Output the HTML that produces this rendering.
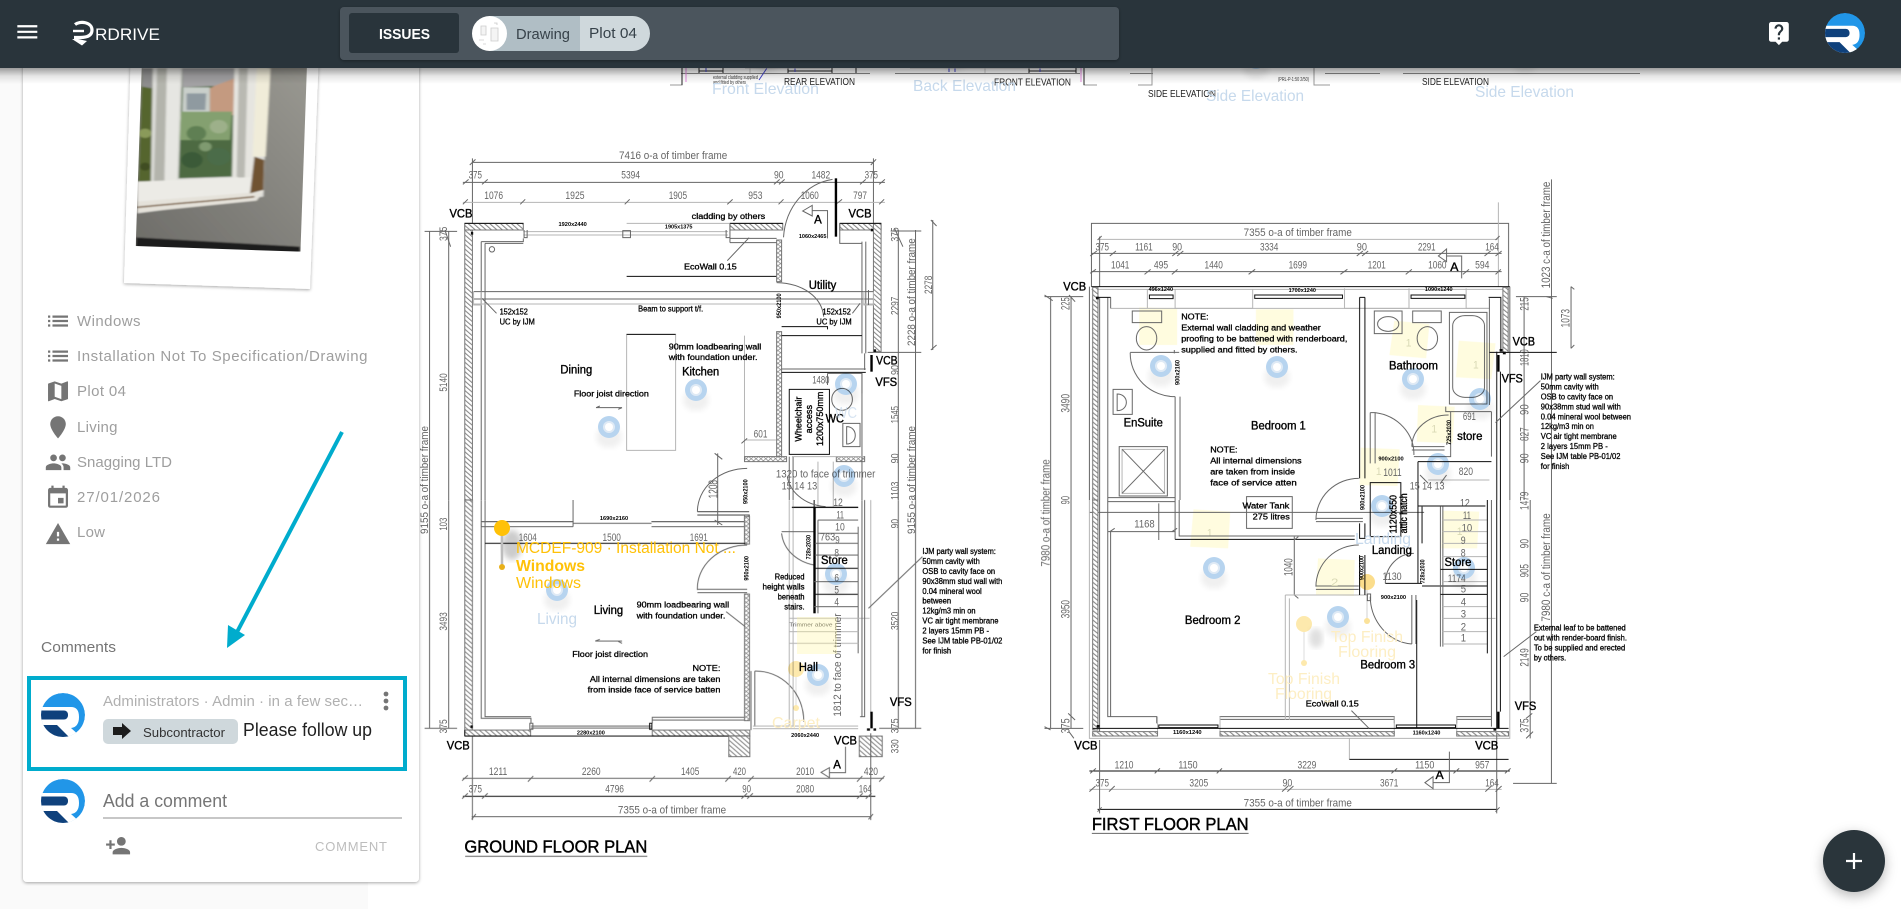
<!DOCTYPE html>
<html><head><meta charset="utf-8"><title>Issue</title>
<style>
html,body{margin:0;padding:0;background:#fff;overflow:hidden}
svg{display:block}
text{font-family:"Liberation Sans",Arial,sans-serif}
.dw path,.dw rect,.dw ellipse,.dw polygon{vector-effect:non-scaling-stroke;fill:none;stroke-width:1}
.dw .g{stroke:#b5b5b5}.dw .a{stroke:#666}.dw .k{stroke:#111}.dw .K{stroke:#000;stroke-width:2.4}
.dw .h{fill:url(#h);stroke:#777}.dw .x{fill:url(#x);stroke:#777}
.dw .st{fill:#fff59d;stroke:none;opacity:.33}
.d{font-size:33px;fill:#666}
.n{font-size:25px;fill:#000;stroke:#000;stroke-width:.9}
.l{font-size:35px;fill:#000;stroke:#000;stroke-width:1.1}
.s{font-size:16px;fill:#000;font-weight:bold}
.c{font-size:30px;fill:#666}
.t{font-size:52px;fill:#000;stroke:#000;stroke-width:1.3}
.y{font-size:34px;fill:#d9d9b5}
.ll{font-size:16px;fill:#c6d9ec}
.o{font-size:16px;fill:#ffc107}
.f{font-size:16px;fill:#fdeec3}
.si{fill:#757575}.st2{font-size:15px;fill:#9e9e9e}
.e{font-size:10px;fill:#222}
.pn{mix-blend-mode:multiply}
</style></head><body>
<svg xmlns="http://www.w3.org/2000/svg" width="1901" height="909" viewBox="0 0 1901 909">
<defs>
<pattern id="h" patternUnits="userSpaceOnUse" width="10" height="10" patternTransform="rotate(-45)"><rect width="10" height="10" fill="#fff"/><rect width="3" height="10" fill="#888"/></pattern>
<pattern id="x" patternUnits="userSpaceOnUse" width="9" height="9" patternTransform="rotate(45)"><rect width="9" height="9" fill="#fff"/><rect width="2" height="9" fill="#888"/><rect width="9" height="2" fill="#888"/></pattern>
<filter id="sh" x="-10%" y="-10%" width="120%" height="120%"><feDropShadow dx="0" dy="1" stdDeviation="1.5" flood-color="#000" flood-opacity=".35"/></filter>
<filter id="sh2" x="-30%" y="-30%" width="160%" height="160%"><feDropShadow dx="0" dy="4" stdDeviation="6" flood-color="#000" flood-opacity=".28"/></filter>
<filter id="bl"><feGaussianBlur stdDeviation=".3"/></filter>
<filter id="bz" x="-2%" y="-2%" width="104%" height="104%"><feGaussianBlur stdDeviation=".9"/></filter>
<filter id="bp" x="-2%" y="-2%" width="104%" height="104%"><feGaussianBlur stdDeviation="2.200"/></filter>
<filter id="bs"><feGaussianBlur stdDeviation="3"/></filter>
<linearGradient id="hs" x1="0" y1="0" x2="0" y2="1"><stop offset="0" stop-color="#000" stop-opacity=".38"/><stop offset=".5" stop-color="#000" stop-opacity=".1"/><stop offset="1" stop-color="#000" stop-opacity="0"/></linearGradient>
<linearGradient id="wl" x1="1" y1="0" x2="0" y2="1"><stop offset="0" stop-color="#9b9a93"/><stop offset="1" stop-color="#6c6b67"/></linearGradient>
<g id="pin"><ellipse cx="0" cy="10" rx="13" ry="11" fill="#000" opacity=".06" filter="url(#bs)"/><circle r="11" fill="#b7d4ef"/><circle r="6" fill="#dfeaf5"/><circle r="4" fill="#fff"/></g>
<clipPath id="cc"><circle r="22"/></clipPath>
<g id="av"><g clip-path="url(#cc)"><circle r="22" fill="#2196e8"/><path d="M-24 -8H8Q16 -8 16 2Q16 12 8 13L18 22L8 26H-24Z" fill="#fff"/><rect x="-26" y="-4.500" width="31" height="9" rx="4" fill="#0f417c"/><path d="M-24 10H-6L7 23H-24Z" fill="#0f417c"/></g></g>
</defs>
<rect width="1901" height="909" fill="#fff"/>
<rect width="368" height="909" fill="#fafafa"/>

<!-- elevation strip -->
<g filter="url(#bl)" fill="none" stroke-width="1">
<path d="M681 73.500H870M895 73.500H1080M1130 73.500H1153M1325 73.500H1380M1403 73.500H1640" stroke="#888"/>
<path d="M670 85H682V68M1084 68V85H1097M1138 85H1152V68M1314 68V85H1330" stroke="#999"/>
<path d="M682 68V85M1084 68V85M699 71H723M788 71H832M1029 71H1076M699 68V73M723 68V73M788 68V73M832 68V73M856 68V73M1029 68V73M1076 68V73" stroke="#222"/>
<path d="M686 68V82M1081 68V82" stroke="#e58ae0"/>
<path d="M759 80L767 68M706 68V72M795 68V72M949 68V72M955 68V72M1040 68V72" stroke="#44c"/>
<path d="M745 68H830M910 68H1060M750 68V73M985 68V73" stroke="#ccc"/>
</g>
<text class="e" x="784" y="85" textLength="71" lengthAdjust="spacingAndGlyphs">REAR  ELEVATION</text>
<text class="e" x="994" y="85.500" textLength="77" lengthAdjust="spacingAndGlyphs">FRONT  ELEVATION</text>
<text class="e" x="1148" y="97" textLength="68" lengthAdjust="spacingAndGlyphs">SIDE  ELEVATION</text>
<text class="e" x="1422" y="85" textLength="67" lengthAdjust="spacingAndGlyphs">SIDE  ELEVATION</text>
<text x="713" y="79" font-size="5" fill="#333" textLength="45" lengthAdjust="spacingAndGlyphs">external cladding supplied</text>
<text x="713" y="84" font-size="5" fill="#333" textLength="33" lengthAdjust="spacingAndGlyphs">and fitted by others</text>
<text x="1278" y="81" font-size="5" fill="#333" textLength="31" lengthAdjust="spacingAndGlyphs">(PRL-P-1:50 2/50)</text>

<!-- GROUND FLOOR upper -->
<g class="dw" transform="translate(420,140) scale(.38265,.33333)" filter="url(#bz)">
<path class="a" d="M137 67H1185M112 127H1215M137 55V250M1185 55V250M25 275V1080M75 275V1080M12 274H97M1250 270V1080M1295 270V1080M1230 273H1310M1170 637H1310M1340 240V630"/>
<path class="g" d="M112 187H1215"/>
<path class="a" d="M130 75L145 58M1178 75L1192 58M112 133L127 118M162 133L177 118M925 133L940 118M938 133L953 118M1150 133L1165 118M1200 133L1215 118M112 193L125 178M262 193L275 178M535 193L548 178M803 193L817 178M937 193L950 178M1090 190L1103 178M1200 193L1213 178M65 270L80 320M1240 265L1262 320M1335 240L1350 258M1335 630L1350 615"/>
<rect class="h" x="117" y="250" width="20" height="830"/>
<rect class="h" x="117" y="250" width="153" height="20"/>
<rect class="h" x="810" y="250" width="138" height="20"/>
<rect class="h" x="1097" y="250" width="108" height="20"/>
<rect class="h" x="1185" y="250" width="20" height="385"/>
<path class="k" d="M117 250H270M810 250H948M1097 250H1205"/>
<path class="g" d="M270 275H805M270 285H805M540 250H810"/>
<path class="a" d="M272 270V293H280V270M530 272H550V293H530ZM800 270V293H810"/>
<path class="a" d="M160 305H270V295M170 310H270M160 305V1080M170 310V1080M810 250V308M810 295H932M810 308H932M1097 250V310H1155M1155 305V640M1165 305V640M1162 640V690"/>
<path class="k" d="M540 409H932"/>
<rect class="x" x="932" y="300" width="13" height="125"/>
<rect class="x" x="932" y="575" width="13" height="375"/>
<path class="a" d="M140 455H1185M140 477H1185"/>
<path class="g" d="M140 492H1185M140 455V495H160V455M1160 455V495H1185V455"/>
<path class="a" d="M950 292C955 200 1010 130 1078 118"/>
<path class="K" d="M1087 115V290"/>
<path class="a" d="M932 428C1000 430 1050 470 1055 530M1172 450V495M162 475L200 520M1150 490L1130 520M803 362L860 293"/>
<path class="k" d="M945 560H1065V568M945 587H1155"/>
<path class="g" d="M848 587V950H930M848 900H930"/>
<path class="k" d="M945 697H1165"/>
<path class="a" d="M945 687H1165"/>
<rect class="g" x="540" y="583" width="128" height="348"/>
<path class="k" d="M540 583H668"/>
<rect class="k" x="965" y="748" width="105" height="195"/>
<path class="a" d="M1065 700H1155V760M1065 700V735"/>
<ellipse class="a" cx="1103" cy="778" rx="27" ry="33"/>
<rect class="a" x="1105" y="850" width="45" height="70"/>
<path class="a" d="M1115 860C1145 860 1145 912 1115 912V860Z"/>
<rect class="x" x="848" y="950" width="110" height="15"/>
<rect class="x" x="1088" y="950" width="74" height="15"/>
<path class="a" d="M855 985A130 130 0 0 0 725 1115M725 1115H860M725 1125H860M778 940V1155M965 950V1080M975 950V1080M770 940L790 958M770 1140L790 1155M840 910L855 895"/>
<rect class="x" x="848" y="1125" width="13" height="75"/>
<path class="a" d="M160 1145H400V1080M605 1145H850"/>
<path class="k" d="M972 1102H1145M1030 1102V1080"/>
<path class="a" d="M460 803L528 803M460 803L470 798M528 803L518 808M1155 1080V700"/>
<path class="g" d="M972 950H1160M1080 965V1100M1040 965V1100"/>
<path class="a" d="M960 1010C965 1050 1000 1095 1060 1100"/>
<path class="K" d="M1180 645V695"/>
<rect x="133" y="276" width="6" height="8" style="fill:#111;stroke:none"/>
<rect x="1178" y="266" width="6" height="8" style="fill:#111;stroke:none"/>
<rect x="1186" y="628" width="6" height="8" style="fill:#111;stroke:none"/>
<ellipse class="a" cx="188" cy="328" rx="7" ry="8"/>
<path class="a" d="M1000 213L1025 196V228ZM1025 212H1065V295"/>
</g>
<g transform="translate(420,140) scale(.38265,.33333)" filter="url(#bz)">
<text class="d" x="520" y="57" textLength="283" lengthAdjust="spacingAndGlyphs">7416 o-a of timber frame</text>
<text class="d" x="127" y="116" textLength="35" lengthAdjust="spacingAndGlyphs">375</text>
<text class="d" x="526" y="116" textLength="49" lengthAdjust="spacingAndGlyphs">5394</text>
<text class="d" x="925" y="116" textLength="25" lengthAdjust="spacingAndGlyphs">90</text>
<text class="d" x="1023" y="116" textLength="49" lengthAdjust="spacingAndGlyphs">1482</text>
<text class="d" x="1162" y="116" textLength="35" lengthAdjust="spacingAndGlyphs">375</text>
<text class="d" x="168" y="177" textLength="49" lengthAdjust="spacingAndGlyphs">1076</text>
<text class="d" x="380" y="177" textLength="50" lengthAdjust="spacingAndGlyphs">1925</text>
<text class="d" x="650" y="177" textLength="48" lengthAdjust="spacingAndGlyphs">1905</text>
<text class="d" x="858" y="177" textLength="37" lengthAdjust="spacingAndGlyphs">953</text>
<text class="d" x="995" y="177" textLength="47" lengthAdjust="spacingAndGlyphs">1060</text>
<text class="d" x="1132" y="177" textLength="36" lengthAdjust="spacingAndGlyphs">797</text>
<text class="l" x="77" y="232" textLength="60" lengthAdjust="spacingAndGlyphs">VCB</text>
<text class="l" x="1120" y="232" textLength="60" lengthAdjust="spacingAndGlyphs">VCB</text>
<text class="l" x="1192" y="674" textLength="56" lengthAdjust="spacingAndGlyphs">VCB</text>
<text class="l" x="1190" y="738" textLength="57" lengthAdjust="spacingAndGlyphs">VFS</text>
<text class="n" x="710" y="237" textLength="192" lengthAdjust="spacingAndGlyphs">cladding by others</text>
<text class="l" x="1030" y="250" textLength="20" lengthAdjust="spacingAndGlyphs">A</text>
<text class="s" x="362" y="258" textLength="74" lengthAdjust="spacingAndGlyphs">1920x2440</text>
<text class="s" x="640" y="265" textLength="72" lengthAdjust="spacingAndGlyphs">1905x1375</text>
<text class="s" x="990" y="294" textLength="72" lengthAdjust="spacingAndGlyphs">1060x2465</text>
<text class="n" x="690" y="389" textLength="138" lengthAdjust="spacingAndGlyphs">EcoWall 0.15</text>
<text class="l" x="1016" y="447" textLength="72" lengthAdjust="spacingAndGlyphs">Utility</text>
<text class="n" x="570" y="515" textLength="170" lengthAdjust="spacingAndGlyphs">Beam to support t/f.</text>
<text class="n" x="208" y="524" textLength="74" lengthAdjust="spacingAndGlyphs">152x152</text>
<text class="n" x="208" y="553" textLength="92" lengthAdjust="spacingAndGlyphs">UC by IJM</text>
<text class="n" x="1052" y="524" textLength="74" lengthAdjust="spacingAndGlyphs">152x152</text>
<text class="n" x="1036" y="553" textLength="92" lengthAdjust="spacingAndGlyphs">UC by IJM</text>
<text class="s" transform="translate(944,535) rotate(-90)" textLength="75" lengthAdjust="spacingAndGlyphs">950x2100</text>
<text class="n" x="650" y="628" textLength="242" lengthAdjust="spacingAndGlyphs">90mm loadbearing wall</text>
<text class="n" x="650" y="660" textLength="232" lengthAdjust="spacingAndGlyphs">with foundation under.</text>
<text class="l" x="367" y="700" textLength="83" lengthAdjust="spacingAndGlyphs">Dining</text>
<text class="l" x="685" y="707" textLength="97" lengthAdjust="spacingAndGlyphs">Kitchen</text>
<text class="n" x="402" y="769" textLength="196" lengthAdjust="spacingAndGlyphs">Floor joist direction</text>
<text class="d" x="1025" y="730" textLength="45" lengthAdjust="spacingAndGlyphs">1480</text>
<text class="l" x="1060" y="848" textLength="48" lengthAdjust="spacingAndGlyphs">WC</text>
<text class="n" transform="translate(997,905) rotate(-90)" textLength="135" lengthAdjust="spacingAndGlyphs">Wheelchair</text>
<text class="n" transform="translate(1025,880) rotate(-90)" textLength="85" lengthAdjust="spacingAndGlyphs">access</text>
<text class="n" transform="translate(1053,918) rotate(-90)" textLength="163" lengthAdjust="spacingAndGlyphs">1200x750mm</text>
<text class="d" x="872" y="892" textLength="36" lengthAdjust="spacingAndGlyphs">601</text>
<text class="s" transform="translate(856,1092) rotate(-90)" textLength="74" lengthAdjust="spacingAndGlyphs">950x2100</text>
<text class="d" x="930" y="1013" textLength="260" lengthAdjust="spacingAndGlyphs">1320 to face of trimmer</text>
<text class="d" x="945" y="1048" textLength="93" lengthAdjust="spacingAndGlyphs">15 14 13</text>
<text class="d" transform="translate(777,1075) rotate(-90)" textLength="55" lengthAdjust="spacingAndGlyphs">1208</text>
<text class="c" transform="translate(70,303) rotate(-90)" textLength="43" lengthAdjust="spacingAndGlyphs">375</text>
<text class="c" transform="translate(70,755) rotate(-90)" textLength="55" lengthAdjust="spacingAndGlyphs">5140</text>
<text class="c" transform="translate(70,1172) rotate(-90)" textLength="39" lengthAdjust="spacingAndGlyphs">103</text>
<text class="c" transform="translate(21,1182) rotate(-90)" textLength="324" lengthAdjust="spacingAndGlyphs">9155 o-a of timber frame</text>
<text class="c" transform="translate(1250,305) rotate(-90)" textLength="43" lengthAdjust="spacingAndGlyphs">375</text>
<text class="c" transform="translate(1250,525) rotate(-90)" textLength="55" lengthAdjust="spacingAndGlyphs">2297</text>
<text class="c" transform="translate(1293,618) rotate(-90)" textLength="323" lengthAdjust="spacingAndGlyphs">2228 o-a of timber frame</text>
<text class="c" transform="translate(1338,462) rotate(-90)" textLength="55" lengthAdjust="spacingAndGlyphs">2278</text>
<text class="c" transform="translate(1250,705) rotate(-90)" textLength="30" lengthAdjust="spacingAndGlyphs">90</text>
<text class="c" transform="translate(1250,850) rotate(-90)" textLength="52" lengthAdjust="spacingAndGlyphs">1545</text>
<text class="c" transform="translate(1250,970) rotate(-90)" textLength="30" lengthAdjust="spacingAndGlyphs">90</text>
<text class="c" transform="translate(1250,1080) rotate(-90)" textLength="55" lengthAdjust="spacingAndGlyphs">1103</text>
<text class="c" transform="translate(1250,1165) rotate(-90)" textLength="28" lengthAdjust="spacingAndGlyphs">90</text>
<text class="c" transform="translate(1293,1182) rotate(-90)" textLength="324" lengthAdjust="spacingAndGlyphs">9155 o-a of timber frame</text>
</g>

<!-- GROUND FLOOR lower -->
<g class="dw" transform="translate(420,500) scale(.38265,.33333)" filter="url(#bz)">
<path class="a" d="M25 0V685M75 0V685M12 685H97M1250 0V685M1295 0V685M1200 685H1310"/>
<rect class="h" x="117" y="0" width="20" height="690"/>
<path class="a" d="M160 0V655H290V670M170 0V650H290M607 670V652H850M607 660H850M160 65H400V80M605 65H850V80M160 80H400M605 80H850M400 70H605M290 678H605M290 684H605"/>
<rect class="a" x="287" y="670" width="8" height="18"/>
<rect class="k" x="600" y="670" width="6" height="18"/>
<rect class="h" x="117" y="690" width="172" height="18"/>
<rect class="h" x="607" y="690" width="255" height="18"/>
<path class="k" d="M117 708H862M117 690V708"/>
<rect class="h" x="807" y="708" width="55" height="62"/>
<rect class="h" x="1148" y="708" width="60" height="62"/>
<rect class="x" x="848" y="50" width="13" height="82"/>
<rect class="x" x="848" y="282" width="13" height="380"/>
<path class="k" d="M170 130H850"/>
<path class="a" d="M725 35H860M725 45H860M160 80V70"/>
<path class="a" d="M855 135A130 130 0 0 0 725 270M725 268H855M725 278H855M875 513A125 150 0 0 1 1003 665M865 513V690M875 513V680"/>
<path class="g" d="M870 678H1145M870 686H1145M965 0V680M975 0V680"/>
<path class="a" d="M945 100C950 150 985 185 1030 195M945 95H1030"/>
<path class="K" d="M1031 20V340"/>
<path class="a" d="M1040 60V340M1040 100H1145M1040 60H1145M1032 130H1145M1032 165H1145"/>
<path class="k" d="M972 22H1145M1030 205H1145M1030 283H1145"/>
<path class="a" d="M1030 245H1145M1030 320H1145M1145 80V460"/>
<path class="g" d="M965 355H1175M965 395H1145M965 430H1145"/>
<path class="a" d="M1155 0V650M1162 0V650H1150"/>
<path class="g" d="M1178 0V640"/>
<path class="K" d="M1180 635V685"/>
<path class="a" d="M1313 170L1172 325M800 335L850 380M458 423H528M458 423L470 418M528 430L518 424"/>
<rect x="132" y="676" width="6" height="8" style="fill:#111;stroke:none"/>
<rect x="1168" y="685" width="8" height="7" style="fill:#111;stroke:none"/>
<rect x="1185" y="685" width="7" height="7" style="fill:#111;stroke:none"/>
<path class="a" d="M112 835H1212"/>
<path class="k" d="M112 889H1190"/>
<path class="a" d="M135 950H1180M137 710V960M1178 700V960"/>
<path class="a" d="M110 842L125 826M282 845L296 828M600 845L614 828M798 845L812 828M858 845L872 828M1142 845L1156 828M1200 845L1214 828M110 896L125 880M162 896L177 880M840 896L855 880M855 896L870 880M1142 896L1157 880M1165 896L1180 880M135 958L146 942M1172 958L1184 942"/>
<polygon class="a" points="1048,817 1070,803 1070,833"/>
<path class="a" d="M1070 818H1112V740M118 1069H594"/>
</g>
<g transform="translate(420,500) scale(.38265,.33333)" filter="url(#bz)">
<text class="s" x="470" y="60" textLength="74" lengthAdjust="spacingAndGlyphs">1690x2160</text>
<text class="d" x="258" y="123" textLength="47" lengthAdjust="spacingAndGlyphs">1604</text>
<text class="d" x="477" y="123" textLength="48" lengthAdjust="spacingAndGlyphs">1500</text>
<text class="d" x="705" y="123" textLength="47" lengthAdjust="spacingAndGlyphs">1691</text>
<text class="d" x="1080" y="18" textLength="25" lengthAdjust="spacingAndGlyphs">12</text>
<text class="d" x="1088" y="55" textLength="20" lengthAdjust="spacingAndGlyphs">11</text>
<text class="d" x="1085" y="92" textLength="25" lengthAdjust="spacingAndGlyphs">10</text>
<text class="d" x="1045" y="122" textLength="40" lengthAdjust="spacingAndGlyphs">763</text>
<text class="d" x="1085" y="130" textLength="12" lengthAdjust="spacingAndGlyphs">9</text>
<text class="d" x="1083" y="170" textLength="12" lengthAdjust="spacingAndGlyphs">8</text>
<text class="d" x="1083" y="245" textLength="12" lengthAdjust="spacingAndGlyphs">6</text>
<text class="d" x="1083" y="280" textLength="12" lengthAdjust="spacingAndGlyphs">5</text>
<text class="d" x="1083" y="317" textLength="12" lengthAdjust="spacingAndGlyphs">4</text>
<text class="s" transform="translate(858,242) rotate(-90)" textLength="74" lengthAdjust="spacingAndGlyphs">950x2100</text>
<text class="s" transform="translate(1021,178) rotate(-90)" textLength="73" lengthAdjust="spacingAndGlyphs">728x2030</text>
<text class="n" x="927" y="238" textLength="78" lengthAdjust="spacingAndGlyphs">Reduced</text>
<text class="n" x="895" y="268" textLength="110" lengthAdjust="spacingAndGlyphs">height walls</text>
<text class="n" x="935" y="298" textLength="70" lengthAdjust="spacingAndGlyphs">beneath</text>
<text class="n" x="952" y="328" textLength="53" lengthAdjust="spacingAndGlyphs">stairs.</text>
<text class="l" x="1048" y="192" textLength="70" lengthAdjust="spacingAndGlyphs">Store</text>
<text class="l" x="454" y="342" textLength="77" lengthAdjust="spacingAndGlyphs">Living</text>
<text class="n" x="566" y="323" textLength="242" lengthAdjust="spacingAndGlyphs">90mm loadbearing wall</text>
<text class="n" x="566" y="355" textLength="232" lengthAdjust="spacingAndGlyphs">with foundation under.</text>
<text class="n" x="398" y="471" textLength="198" lengthAdjust="spacingAndGlyphs">Floor joist direction</text>
<text class="n" x="712" y="513" textLength="73" lengthAdjust="spacingAndGlyphs">NOTE:</text>
<text class="n" x="444" y="546" textLength="341" lengthAdjust="spacingAndGlyphs">All internal dimensions are taken</text>
<text class="n" x="438" y="578" textLength="347" lengthAdjust="spacingAndGlyphs">from inside face of service batten</text>
<text class="l" x="990" y="513" textLength="50" lengthAdjust="spacingAndGlyphs">Hall</text>
<text x="965" y="380" font-size="15" fill="#555" textLength="113" lengthAdjust="spacingAndGlyphs">Trimmer above</text>
<text class="c" transform="translate(1100,650) rotate(-90)" textLength="310" lengthAdjust="spacingAndGlyphs">1812 to face of trimmer</text>
<text class="s" x="410" y="703" textLength="73" lengthAdjust="spacingAndGlyphs">2280x2100</text>
<text class="s" x="970" y="711" textLength="73" lengthAdjust="spacingAndGlyphs">2060x2440</text>
<text class="n" x="1313" y="162" textLength="192" lengthAdjust="spacingAndGlyphs">IJM party wall system:</text>
<text class="n" x="1313" y="192" textLength="150" lengthAdjust="spacingAndGlyphs">50mm cavity with</text>
<text class="n" x="1313" y="222" textLength="190" lengthAdjust="spacingAndGlyphs">OSB to cavity face on</text>
<text class="n" x="1313" y="252" textLength="209" lengthAdjust="spacingAndGlyphs">90x38mm stud wall with</text>
<text class="n" x="1313" y="282" textLength="155" lengthAdjust="spacingAndGlyphs">0.04 mineral wool</text>
<text class="n" x="1313" y="311" textLength="75" lengthAdjust="spacingAndGlyphs">between</text>
<text class="n" x="1313" y="341" textLength="139" lengthAdjust="spacingAndGlyphs">12kg/m3 min on</text>
<text class="n" x="1313" y="371" textLength="199" lengthAdjust="spacingAndGlyphs">VC air tight membrane</text>
<text class="n" x="1313" y="401" textLength="174" lengthAdjust="spacingAndGlyphs">2 layers 15mm PB -</text>
<text class="n" x="1313" y="431" textLength="209" lengthAdjust="spacingAndGlyphs">See IJM table PB-01/02</text>
<text class="n" x="1313" y="461" textLength="75" lengthAdjust="spacingAndGlyphs">for finish</text>
<text class="l" x="70" y="748" textLength="60" lengthAdjust="spacingAndGlyphs">VCB</text>
<text class="l" x="1082" y="733" textLength="60" lengthAdjust="spacingAndGlyphs">VCB</text>
<text class="l" x="1228" y="618" textLength="57" lengthAdjust="spacingAndGlyphs">VFS</text>
<text class="l" x="1080" y="805" textLength="20" lengthAdjust="spacingAndGlyphs">A</text>
<text class="d" x="180" y="825" textLength="48" lengthAdjust="spacingAndGlyphs">1211</text>
<text class="d" x="423" y="825" textLength="49" lengthAdjust="spacingAndGlyphs">2260</text>
<text class="d" x="682" y="825" textLength="48" lengthAdjust="spacingAndGlyphs">1405</text>
<text class="d" x="818" y="825" textLength="34" lengthAdjust="spacingAndGlyphs">420</text>
<text class="d" x="983" y="825" textLength="47" lengthAdjust="spacingAndGlyphs">2010</text>
<text class="d" x="1160" y="825" textLength="37" lengthAdjust="spacingAndGlyphs">420</text>
<text class="d" x="127" y="878" textLength="35" lengthAdjust="spacingAndGlyphs">375</text>
<text class="d" x="484" y="878" textLength="49" lengthAdjust="spacingAndGlyphs">4796</text>
<text class="d" x="842" y="878" textLength="23" lengthAdjust="spacingAndGlyphs">90</text>
<text class="d" x="983" y="878" textLength="47" lengthAdjust="spacingAndGlyphs">2080</text>
<text class="d" x="1147" y="878" textLength="33" lengthAdjust="spacingAndGlyphs">164</text>
<text class="d" x="517" y="941" textLength="283" lengthAdjust="spacingAndGlyphs">7355 o-a of timber frame</text>
<text class="t" x="116" y="1058" textLength="478" lengthAdjust="spacingAndGlyphs">GROUND FLOOR PLAN</text>
<text class="c" transform="translate(70,392) rotate(-90)" textLength="55" lengthAdjust="spacingAndGlyphs">3493</text>
<text class="c" transform="translate(70,700) rotate(-90)" textLength="42" lengthAdjust="spacingAndGlyphs">375</text>
<text class="c" transform="translate(1250,390) rotate(-90)" textLength="55" lengthAdjust="spacingAndGlyphs">3520</text>
<text class="c" transform="translate(1250,700) rotate(-90)" textLength="45" lengthAdjust="spacingAndGlyphs">375</text>
<text class="c" transform="translate(1250,760) rotate(-90)" textLength="42" lengthAdjust="spacingAndGlyphs">330</text>
</g>

<!-- FIRST FLOOR upper -->
<g class="dw" transform="translate(1020,170) scale(.40816,.33333)" filter="url(#bz)">
<polygon class="st" points="292,412 385,415 385,525 292,525"/>
<polygon class="st" points="578,418 670,418 670,525 578,525"/>
<polygon class="st" points="917,452 1003,462 995,565 905,555"/>
<polygon class="st" points="1075,512 1165,520 1155,627 1068,622"/>
<polygon class="st" points="975,705 1065,710 1060,820 972,815"/>
<polygon class="st" points="835,833 930,838 925,948 832,945"/>
<polygon class="st" points="425,1018 515,1025 510,1135 417,1130"/>
<polygon class="st" points="1035,1022 1125,1025 1120,1135 1032,1135"/>
<path class="a" d="M175 350V160H1197V350M175 250H1180M175 305H1180"/>
<path class="g" d="M195 208H1170M1172 97V350"/>
<path class="a" d="M195 200V350M1302 28V990M75 380V990M125 380V990M60 380H155M1235 380V990M1215 380H1315M1350 350V535M170 990V350M1200 350V990"/>
<path class="a" d="M172 258L188 243M220 258L235 243M373 258L388 243M385 258L400 243M825 258L840 243M838 258L853 243M1138 258L1153 243M1165 258L1180 243M172 310L186 298M305 313L320 298M372 313L386 298M560 313L576 298M785 313L802 298M945 313L960 298M1085 313L1100 298M1165 313L1178 298M190 210L200 198M1165 210L1175 198"/>
<path class="a" d="M1045 237L1025 258L1045 275ZM1045 258H1082V325"/>
<path class="k" d="M175 350H1200"/>
<path class="g" d="M175 358H1200M222 415H1150"/>
<rect class="h" x="178" y="352" width="13" height="638"/>
<rect class="h" x="1183" y="352" width="13" height="195"/>
<path class="g" d="M312 358V415M380 358V415H570V358M795 355V415H953V355M1093 355V415H1150V385"/>
<rect class="k" x="317" y="375" width="58" height="11"/>
<rect class="k" x="575" y="375" width="215" height="10"/>
<rect class="k" x="958" y="375" width="132" height="10"/>
<path class="a" d="M195 382V990M215 382V990M222 382V415"/>
<path class="k" d="M190 382H222M1148 382H1178V545"/>
<path class="a" d="M1150 385V705"/>
<path class="K" d="M1172 555V605"/>
<path class="k" d="M1168 545V990M1177 605V990M1150 547H1315"/>
<path class="k" d="M832 382V925M845 382V925M832 382H845"/>
<path class="a" d="M270 547H390M378 540V550M270 548A110 130 0 0 0 380 680M380 680V990M392 680V990"/>
<rect class="a" x="275" y="423" width="72" height="35"/>
<ellipse class="a" cx="310" cy="505" rx="25" ry="35"/>
<rect class="a" x="962" y="423" width="70" height="35"/>
<ellipse class="a" cx="998" cy="505" rx="25" ry="35"/>
<rect class="a" x="868" y="423" width="68" height="68"/>
<ellipse class="a" cx="902" cy="462" rx="26" ry="22"/>
<rect class="a" x="1052" y="427" width="92" height="275"/>
<rect class="a" x="1060" y="437" width="78" height="245" rx="30"/>
<rect class="a" x="228" y="658" width="47" height="75"/>
<path class="a" d="M238 672C268 672 268 722 238 722V672Z"/>
<rect class="a" x="243" y="830" width="118" height="148"/>
<rect class="g" x="250" y="838" width="104" height="132"/>
<path class="a" d="M250 838L354 970M354 838L250 970M215 983H380M215 995H380M170 1027H990"/>
<rect class="a" x="555" y="980" width="112" height="95"/>
<path class="k" d="M858 938H933V1100H858Z"/>
<path class="a" d="M1043 710V725H1155M1155 725V860M1055 725V860H965M1050 735A90 95 0 0 0 960 830M960 830H1040M960 840H1040M858 728H870A110 125 0 0 1 965 855M858 728V880M870 728V880"/>
<path class="k" d="M975 875H1155M975 875V990"/>
<path class="g" d="M1000 930H1150"/>
<path class="k" d="M978 1008H1140"/>
<path class="a" d="M725 1050A105 125 0 0 1 830 925M725 1045H840M725 1055H840"/>
<path class="a" d="M60 375L80 392M120 375L135 395M1290 380L1305 385M1350 350L1358 358M1350 535L1358 525"/>
<path class="a" d="M1275 632L1165 758M980 915L1000 940M1030 940L1045 915"/>
<rect x="186" y="380" width="7" height="8" style="fill:#111;stroke:none"/>
<rect x="1175" y="537" width="7" height="8" style="fill:#111;stroke:none"/>
<rect x="1183" y="545" width="7" height="8" style="fill:#111;stroke:none"/>
</g>
<g transform="translate(1020,170) scale(.40816,.33333)" filter="url(#bz)">
<text class="d" x="548" y="198" textLength="265" lengthAdjust="spacingAndGlyphs">7355 o-a of timber frame</text>
<text class="d" x="185" y="241" textLength="33" lengthAdjust="spacingAndGlyphs">375</text>
<text class="d" x="282" y="241" textLength="43" lengthAdjust="spacingAndGlyphs">1161</text>
<text class="d" x="373" y="241" textLength="24" lengthAdjust="spacingAndGlyphs">90</text>
<text class="d" x="588" y="241" textLength="45" lengthAdjust="spacingAndGlyphs">3334</text>
<text class="d" x="825" y="241" textLength="25" lengthAdjust="spacingAndGlyphs">90</text>
<text class="d" x="975" y="241" textLength="43" lengthAdjust="spacingAndGlyphs">2291</text>
<text class="d" x="1140" y="241" textLength="33" lengthAdjust="spacingAndGlyphs">164</text>
<text class="d" x="223" y="296" textLength="45" lengthAdjust="spacingAndGlyphs">1041</text>
<text class="d" x="328" y="296" textLength="35" lengthAdjust="spacingAndGlyphs">495</text>
<text class="d" x="452" y="296" textLength="45" lengthAdjust="spacingAndGlyphs">1440</text>
<text class="d" x="658" y="296" textLength="45" lengthAdjust="spacingAndGlyphs">1699</text>
<text class="d" x="852" y="296" textLength="44" lengthAdjust="spacingAndGlyphs">1201</text>
<text class="d" x="1000" y="296" textLength="45" lengthAdjust="spacingAndGlyphs">1060</text>
<text class="d" x="1115" y="296" textLength="35" lengthAdjust="spacingAndGlyphs">594</text>
<text class="l" x="1054" y="303" textLength="20" lengthAdjust="spacingAndGlyphs">A</text>
<text class="l" x="106" y="362" textLength="56" lengthAdjust="spacingAndGlyphs">VCB</text>
<text class="l" x="1207" y="527" textLength="55" lengthAdjust="spacingAndGlyphs">VCB</text>
<text class="l" x="1180" y="637" textLength="52" lengthAdjust="spacingAndGlyphs">VFS</text>
<text class="s" x="315" y="363" textLength="60" lengthAdjust="spacingAndGlyphs">496x1240</text>
<text class="s" x="658" y="366" textLength="67" lengthAdjust="spacingAndGlyphs">1700x1240</text>
<text class="s" x="992" y="363" textLength="68" lengthAdjust="spacingAndGlyphs">1090x1240</text>
<text class="n" x="395" y="449" textLength="67" lengthAdjust="spacingAndGlyphs">NOTE:</text>
<text class="n" x="395" y="481" textLength="342" lengthAdjust="spacingAndGlyphs">External wall cladding and weather</text>
<text class="n" x="395" y="515" textLength="407" lengthAdjust="spacingAndGlyphs">proofing to be battened with renderboard,</text>
<text class="n" x="395" y="547" textLength="285" lengthAdjust="spacingAndGlyphs">supplied and fitted by others.</text>
<text class="l" x="904" y="598" textLength="120" lengthAdjust="spacingAndGlyphs">Bathroom</text>
<text class="l" x="254" y="770" textLength="96" lengthAdjust="spacingAndGlyphs">EnSuite</text>
<text class="l" x="566" y="779" textLength="134" lengthAdjust="spacingAndGlyphs">Bedroom 1</text>
<text class="n" x="466" y="848" textLength="67" lengthAdjust="spacingAndGlyphs">NOTE:</text>
<text class="n" x="466" y="881" textLength="224" lengthAdjust="spacingAndGlyphs">All internal dimensions</text>
<text class="n" x="466" y="914" textLength="208" lengthAdjust="spacingAndGlyphs">are taken from inside</text>
<text class="n" x="466" y="947" textLength="212" lengthAdjust="spacingAndGlyphs">face of service   atten</text>
<text class="n" x="545" y="1016" textLength="115" lengthAdjust="spacingAndGlyphs">Water Tank</text>
<text class="n" x="570" y="1049" textLength="91" lengthAdjust="spacingAndGlyphs">275 litres</text>
<text class="l" x="1071" y="810" textLength="62" lengthAdjust="spacingAndGlyphs">store</text>
<text class="d" x="1085" y="750" textLength="32" lengthAdjust="spacingAndGlyphs">691</text>
<text class="d" x="1075" y="915" textLength="35" lengthAdjust="spacingAndGlyphs">820</text>
<text class="d" x="890" y="918" textLength="45" lengthAdjust="spacingAndGlyphs">1011</text>
<text class="s" x="878" y="872" textLength="62" lengthAdjust="spacingAndGlyphs">900x2100</text>
<text class="d" x="955" y="958" textLength="85" lengthAdjust="spacingAndGlyphs">15 14 13</text>
<text class="d" x="1078" y="1010" textLength="24" lengthAdjust="spacingAndGlyphs">12</text>
<text class="d" x="1085" y="1047" textLength="20" lengthAdjust="spacingAndGlyphs">11</text>
<text class="d" x="1082" y="1085" textLength="26" lengthAdjust="spacingAndGlyphs">10</text>
<text class="d" x="280" y="1072" textLength="50" lengthAdjust="spacingAndGlyphs">1168</text>
<text class="n" transform="translate(922,1090) rotate(-90)" textLength="115" lengthAdjust="spacingAndGlyphs">1120x550</text>
<text class="n" transform="translate(948,1090) rotate(-90)" textLength="120" lengthAdjust="spacingAndGlyphs">attic hatch</text>
<text class="s" transform="translate(844,1020) rotate(-90)" textLength="75" lengthAdjust="spacingAndGlyphs">900x2100</text>
<text class="s" transform="translate(391,645) rotate(-90)" textLength="75" lengthAdjust="spacingAndGlyphs">900x2160</text>
<text class="s" transform="translate(1056,825) rotate(-90)" textLength="75" lengthAdjust="spacingAndGlyphs">725x2030</text>
<text class="n" x="1276" y="628" textLength="181" lengthAdjust="spacingAndGlyphs">IJM party wall system:</text>
<text class="n" x="1276" y="658" textLength="142" lengthAdjust="spacingAndGlyphs">50mm cavity with</text>
<text class="n" x="1276" y="688" textLength="177" lengthAdjust="spacingAndGlyphs">OSB to cavity face on</text>
<text class="n" x="1276" y="718" textLength="196" lengthAdjust="spacingAndGlyphs">90x38mm stud wall with</text>
<text class="n" x="1276" y="748" textLength="221" lengthAdjust="spacingAndGlyphs">0.04 mineral wool between</text>
<text class="n" x="1276" y="777" textLength="130" lengthAdjust="spacingAndGlyphs">12kg/m3 min on</text>
<text class="n" x="1276" y="807" textLength="186" lengthAdjust="spacingAndGlyphs">VC air tight membrane</text>
<text class="n" x="1276" y="837" textLength="164" lengthAdjust="spacingAndGlyphs">2 layers 15mm PB -</text>
<text class="n" x="1276" y="867" textLength="195" lengthAdjust="spacingAndGlyphs">See IJM table PB-01/02</text>
<text class="n" x="1276" y="897" textLength="70" lengthAdjust="spacingAndGlyphs">for finish</text>
<text class="c" transform="translate(1299,355) rotate(-90)" textLength="320" lengthAdjust="spacingAndGlyphs">1023 c-a of timber frame</text>
<text class="c" transform="translate(121,420) rotate(-90)" textLength="38" lengthAdjust="spacingAndGlyphs">225</text>
<text class="c" transform="translate(121,728) rotate(-90)" textLength="56" lengthAdjust="spacingAndGlyphs">3490</text>
<text class="c" transform="translate(121,1003) rotate(-90)" textLength="25" lengthAdjust="spacingAndGlyphs">90</text>
<text class="c" transform="translate(1246,422) rotate(-90)" textLength="40" lengthAdjust="spacingAndGlyphs">215</text>
<text class="c" transform="translate(1246,588) rotate(-90)" textLength="50" lengthAdjust="spacingAndGlyphs">1810</text>
<text class="c" transform="translate(1346,472) rotate(-90)" textLength="55" lengthAdjust="spacingAndGlyphs">1073</text>
<text class="c" transform="translate(1246,735) rotate(-90)" textLength="32" lengthAdjust="spacingAndGlyphs">90</text>
<text class="c" transform="translate(1246,813) rotate(-90)" textLength="41" lengthAdjust="spacingAndGlyphs">827</text>
<text class="c" transform="translate(1246,880) rotate(-90)" textLength="30" lengthAdjust="spacingAndGlyphs">90</text>
<text class="c" transform="translate(1246,1020) rotate(-90)" textLength="55" lengthAdjust="spacingAndGlyphs">1479</text>
<text class="c" transform="translate(73,1190) rotate(-90)" textLength="322" lengthAdjust="spacingAndGlyphs">7980 o-a of timber frame</text>
<text class="y" x="945" y="530" textLength="14" lengthAdjust="spacingAndGlyphs">1</text>
<text class="y" x="1110" y="595" textLength="14" lengthAdjust="spacingAndGlyphs">1</text>
<text class="y" x="1008" y="788" textLength="14" lengthAdjust="spacingAndGlyphs">1</text>
<text class="y" x="872" y="915" textLength="14" lengthAdjust="spacingAndGlyphs">1</text>
<text class="y" x="458" y="1100" textLength="14" lengthAdjust="spacingAndGlyphs">1</text>
<text class="y" x="1070" y="1095" textLength="14" lengthAdjust="spacingAndGlyphs">1</text>
</g>

<!-- FIRST FLOOR lower -->
<g class="dw" transform="translate(1020,500) scale(.40816,.33333)" filter="url(#bz)">
<polygon class="st" points="730,175 820,180 818,288 725,285"/>
<path class="a" d="M75 0V685M125 0V685M60 685H155M1250 0V715M1302 0V850M1208 850H1315"/>
<path class="g" d="M170 0V715H1200V0"/>
<rect class="h" x="178" y="0" width="13" height="690"/>
<path class="a" d="M195 0V700M215 0V650H335V670M222 95V650H335M490 670V650H917V670M490 658H917M1070 670V650H1155M1070 658H1155M215 95H380M380 0V118"/>
<rect class="k" x="340" y="675" width="145" height="8"/>
<rect class="k" x="922" y="675" width="145" height="8"/>
<path class="g" d="M337 650V700M490 650V700M917 650V700M1070 650V700"/>
<rect class="h" x="178" y="695" width="159" height="13"/>
<rect class="h" x="490" y="695" width="427" height="13"/>
<rect class="h" x="1070" y="695" width="127" height="13"/>
<path class="k" d="M178 685H1197M380 118H820"/>
<path class="a" d="M390 0V108H820M672 110V285M340 10V120M220 95L232 85M372 95L385 85M672 120L682 110M672 285L682 295"/>
<path class="g" d="M650 285H850M650 285V660M660 295V660"/>
<path class="a" d="M830 135A105 125 0 0 0 725 260M725 258H830M725 268H830"/>
<path class="k" d="M832 70V115H845V70M832 165V285M845 165V285"/>
<path class="a" d="M858 290A110 145 0 0 0 960 432M960 285V432M970 285V432"/>
<rect class="a" x="851" y="282" width="8" height="20"/>
<path class="k" d="M972 300V685M895 250H985M985 258H1145M975 0V250M985 20V130"/>
<path class="a" d="M895 250A70 90 0 0 1 965 160"/>
<path class="a" d="M1030 20V440M1036 20V440"/>
<path class="g" d="M1036 60H1145M1036 95H1145M1036 130H1145M1036 170H1145M1036 245H1145M1036 320H1145M1036 355H1165M1036 395H1145M1036 432H1145"/>
<path class="k" d="M975 18H1140M1030 208H1145M1030 283H1145M1145 0V460"/>
<path class="k" d="M1168 0V685M1177 0V635"/>
<path class="a" d="M1155 0V680"/>
<path class="K" d="M1172 635V685"/>
<rect x="188" y="675" width="7" height="8" style="fill:#111;stroke:none"/>
<rect x="1160" y="685" width="7" height="7" style="fill:#111;stroke:none"/>
<path class="k" d="M170 813H1200"/>
<path class="g" d="M170 868H1180"/>
<path class="k" d="M190 928H1170"/>
<path class="a" d="M195 720V940M1168 700V940M172 820L186 805M330 820L343 805M482 820L495 805M910 820L924 805M1062 820L1076 805M1188 820L1202 805M170 875L185 858M218 875L232 858M642 875L657 858M655 875L670 858M1140 875L1155 858M1165 875L1180 858M190 935L200 922M1165 935L1175 922"/>
<path class="g" d="M807 715V778"/>
<path class="k" d="M807 778H1197"/>
<polygon class="a" points="992,848 1012,830 1012,866"/>
<path class="a" d="M1012 848H1052V755M812 632L855 685M1265 395L1185 470M60 680L75 690M118 640L135 660M120 695L132 715M1240 655L1255 640M1240 715L1257 695"/>
<path class="a" d="M176 1000H560"/>
</g>
<g transform="translate(1020,500) scale(.40816,.33333)" filter="url(#bz)">
<text class="y" x="762" y="258" textLength="18" lengthAdjust="spacingAndGlyphs">2</text>
<text class="l" x="133" y="748" textLength="57" lengthAdjust="spacingAndGlyphs">VCB</text>
<text class="l" x="1115" y="748" textLength="57" lengthAdjust="spacingAndGlyphs">VCB</text>
<text class="l" x="1212" y="630" textLength="53" lengthAdjust="spacingAndGlyphs">VFS</text>
<text class="l" x="1018" y="837" textLength="20" lengthAdjust="spacingAndGlyphs">A</text>
<text class="d" x="232" y="805" textLength="46" lengthAdjust="spacingAndGlyphs">1210</text>
<text class="d" x="388" y="805" textLength="47" lengthAdjust="spacingAndGlyphs">1150</text>
<text class="d" x="680" y="805" textLength="46" lengthAdjust="spacingAndGlyphs">3229</text>
<text class="d" x="968" y="805" textLength="47" lengthAdjust="spacingAndGlyphs">1150</text>
<text class="d" x="1115" y="805" textLength="35" lengthAdjust="spacingAndGlyphs">957</text>
<text class="d" x="185" y="860" textLength="33" lengthAdjust="spacingAndGlyphs">375</text>
<text class="d" x="415" y="860" textLength="46" lengthAdjust="spacingAndGlyphs">3205</text>
<text class="d" x="643" y="860" textLength="24" lengthAdjust="spacingAndGlyphs">90</text>
<text class="d" x="882" y="860" textLength="45" lengthAdjust="spacingAndGlyphs">3671</text>
<text class="d" x="1140" y="860" textLength="33" lengthAdjust="spacingAndGlyphs">164</text>
<text class="d" x="548" y="920" textLength="265" lengthAdjust="spacingAndGlyphs">7355 o-a of timber frame</text>
<text class="t" x="176" y="990" textLength="384" lengthAdjust="spacingAndGlyphs">FIRST FLOOR PLAN</text>
<text class="n" x="700" y="620" textLength="130" lengthAdjust="spacingAndGlyphs">EcoWall 0.15</text>
<text class="l" x="404" y="372" textLength="136" lengthAdjust="spacingAndGlyphs">Bedroom 2</text>
<text class="l" x="834" y="505" textLength="134" lengthAdjust="spacingAndGlyphs">Bedroom 3</text>
<text class="l" x="862" y="162" textLength="98" lengthAdjust="spacingAndGlyphs">Landing</text>
<text class="l" x="1040" y="198" textLength="66" lengthAdjust="spacingAndGlyphs">Store</text>
<text class="d" x="888" y="240" textLength="47" lengthAdjust="spacingAndGlyphs">1130</text>
<text class="s" x="884" y="297" textLength="62" lengthAdjust="spacingAndGlyphs">900x2100</text>
<text class="d" x="1048" y="246" textLength="44" lengthAdjust="spacingAndGlyphs">1174</text>
<text class="d" x="1080" y="132" textLength="12" lengthAdjust="spacingAndGlyphs">9</text>
<text class="d" x="1080" y="170" textLength="12" lengthAdjust="spacingAndGlyphs">8</text>
<text class="d" x="1080" y="278" textLength="13" lengthAdjust="spacingAndGlyphs">5</text>
<text class="d" x="1080" y="316" textLength="13" lengthAdjust="spacingAndGlyphs">4</text>
<text class="d" x="1080" y="353" textLength="13" lengthAdjust="spacingAndGlyphs">3</text>
<text class="d" x="1080" y="392" textLength="13" lengthAdjust="spacingAndGlyphs">2</text>
<text class="d" x="1080" y="425" textLength="13" lengthAdjust="spacingAndGlyphs">1</text>
<text class="s" x="375" y="702" textLength="70" lengthAdjust="spacingAndGlyphs">1160x1240</text>
<text class="s" x="962" y="703" textLength="68" lengthAdjust="spacingAndGlyphs">1160x1240</text>
<text class="s" transform="translate(842,240) rotate(-90)" textLength="72" lengthAdjust="spacingAndGlyphs">900x2100</text>
<text class="s" transform="translate(991,250) rotate(-90)" textLength="72" lengthAdjust="spacingAndGlyphs">728x2030</text>
<text class="n" x="1259" y="392" textLength="225" lengthAdjust="spacingAndGlyphs">External leaf to be battened</text>
<text class="n" x="1259" y="422" textLength="228" lengthAdjust="spacingAndGlyphs">out with render-board finish.</text>
<text class="n" x="1259" y="452" textLength="224" lengthAdjust="spacingAndGlyphs">To be supplied and erected</text>
<text class="n" x="1259" y="482" textLength="79" lengthAdjust="spacingAndGlyphs">by others.</text>
<text class="c" transform="translate(121,355) rotate(-90)" textLength="55" lengthAdjust="spacingAndGlyphs">3950</text>
<text class="c" transform="translate(121,700) rotate(-90)" textLength="45" lengthAdjust="spacingAndGlyphs">375</text>
<text class="c" transform="translate(668,228) rotate(-90)" textLength="53" lengthAdjust="spacingAndGlyphs">1040</text>
<text class="c" transform="translate(1246,145) rotate(-90)" textLength="28" lengthAdjust="spacingAndGlyphs">90</text>
<text class="c" transform="translate(1246,232) rotate(-90)" textLength="40" lengthAdjust="spacingAndGlyphs">905</text>
<text class="c" transform="translate(1246,307) rotate(-90)" textLength="29" lengthAdjust="spacingAndGlyphs">90</text>
<text class="c" transform="translate(1246,500) rotate(-90)" textLength="55" lengthAdjust="spacingAndGlyphs">2149</text>
<text class="c" transform="translate(1246,698) rotate(-90)" textLength="43" lengthAdjust="spacingAndGlyphs">375</text>
<text class="c" transform="translate(1298,365) rotate(-90)" textLength="325" lengthAdjust="spacingAndGlyphs">7980 c-a of timber frame</text>
</g>

<!-- blue pins -->
<g class="pn">
<use href="#pin" x="609" y="427"/><use href="#pin" x="696" y="390"/><use href="#pin" x="846" y="384"/><use href="#pin" x="844" y="476"/><use href="#pin" x="836" y="574"/><use href="#pin" x="818" y="675"/><use href="#pin" x="557" y="590"/>
<use href="#pin" x="1161" y="366"/><use href="#pin" x="1277" y="367"/><use href="#pin" x="1413" y="379"/><use href="#pin" x="1480" y="399"/><use href="#pin" x="1438" y="464"/><use href="#pin" x="1382" y="506"/><use href="#pin" x="1214" y="568"/><use href="#pin" x="1338" y="617"/><use href="#pin" x="1464" y="568"/>
<use href="#pin" x="767" y="52"/><use href="#pin" x="955" y="50"/><use href="#pin" x="1256" y="58"/><use href="#pin" x="1525" y="52"/>
</g>
<text class="ll" x="537" y="624" textLength="40" lengthAdjust="spacingAndGlyphs">Living</text>
<text class="ll" x="835" y="418" textLength="22" lengthAdjust="spacingAndGlyphs" opacity=".7">WC</text>
<text class="ll" x="1355" y="544" textLength="56" lengthAdjust="spacingAndGlyphs">Landing</text>
<text class="ll" x="712" y="94" textLength="107" lengthAdjust="spacingAndGlyphs">Front Elevation</text>
<text class="ll" x="913" y="91" textLength="103" lengthAdjust="spacingAndGlyphs">Back Elevation</text>
<text class="ll" x="1206" y="101" textLength="98" lengthAdjust="spacingAndGlyphs">Side Elevation</text>
<text class="ll" x="1475" y="97" textLength="99" lengthAdjust="spacingAndGlyphs">Side Elevation</text>

<!-- orange pins -->
<polygon points="797,617 837,617 837,654 797,654" fill="#fff59d" opacity=".33"/>
<ellipse cx="512" cy="545" rx="10" ry="15" fill="#000" opacity=".2" filter="url(#bs)"/>
<path d="M502 532V566" stroke="#bdbdbd" stroke-width="2.500"/>
<circle cx="502" cy="528" r="8" fill="#ffc107"/><circle cx="502" cy="567" r="3" fill="#e8b01a"/>
<text class="o" x="516" y="553" textLength="220" lengthAdjust="spacingAndGlyphs">MCDEF-909 · Installation Not ...</text>
<text class="o" x="516" y="571" font-weight="bold" textLength="69" lengthAdjust="spacingAndGlyphs">Windows</text>
<text class="o" x="516" y="588" textLength="65" lengthAdjust="spacingAndGlyphs">Windows</text>
<g class="pn">
<path d="M796 675V706" stroke="#eee" stroke-width="2"/><circle cx="796" cy="669" r="8" fill="#fde9ad"/><circle cx="796" cy="708" r="3" fill="#fde9ad"/>
<path d="M1367 588V620" stroke="#e8e8e8" stroke-width="2"/><circle cx="1367" cy="582" r="8" fill="#fbdd8c"/><circle cx="1367" cy="621" r="3" fill="#fbe29a"/>
<path d="M1304 630V662" stroke="#eee" stroke-width="2"/><circle cx="1304" cy="624" r="8" fill="#fde9ad"/><circle cx="1304" cy="663" r="3" fill="#fde9ad"/>
</g>
<text class="f" x="772" y="728" textLength="48" lengthAdjust="spacingAndGlyphs">Carpet</text>
<text class="f" x="1331" y="642" textLength="72" lengthAdjust="spacingAndGlyphs">Top Finish</text>
<text class="f" x="1338" y="657" textLength="58" lengthAdjust="spacingAndGlyphs">Flooring</text>
<ellipse cx="1316" cy="638" rx="7" ry="10" fill="#000" opacity=".12" filter="url(#bs)"/>
<text class="f" x="1268" y="684" textLength="72" lengthAdjust="spacingAndGlyphs">Top Finish</text>
<text class="f" x="1275" y="699" textLength="57" lengthAdjust="spacingAndGlyphs">Flooring</text>

<!-- sidebar card -->
<rect x="23" y="40" width="396" height="842" rx="4" fill="#fff" filter="url(#sh)"/>
<polygon points="131,50 319,50 310,289 124,283" fill="#fff" filter="url(#sh)"/>
<!-- photo -->
<clipPath id="pc"><polygon points="318,180 688,180 673,755 304,738"/></clipPath>
<g transform="scale(.44643,.33333)"><g clip-path="url(#pc)"><g filter="url(#bp)">
<polygon points="300,170 700,170 690,770 290,750" fill="url(#wl)"/>
<polygon points="318,180 600,180 590,590 308,640" fill="#dcdcd8"/>
<polygon points="318,204 342,204 338,545 310,545" fill="#55652f"/>
<circle cx="325" cy="400" r="14" fill="#8a9a5a"/><circle cx="325" cy="500" r="12" fill="#3f4d22"/>
<polygon points="318,204 342,204 341,265 318,260" fill="#8d8d8d"/>
<polygon points="408,204 525,204 520,530 400,535" fill="#4d6a42"/>
<polygon points="408,204 525,204 524,250 480,258 408,262" fill="#a2a1a3"/>
<polygon points="480,258 525,235 523,345 470,345 470,265" fill="#c49a80"/>
<polygon points="410,262 470,262 470,345 408,345" fill="#c9cfca"/>
<polygon points="418,280 462,280 460,330 418,330" fill="#8f9aa0"/>
<polygon points="405,335 520,335 515,420 402,420" fill="#84a06f"/>
<circle cx="440" cy="400" r="22" fill="#5f7f52"/><circle cx="490" cy="380" r="20" fill="#9db08a"/><circle cx="430" cy="480" r="24" fill="#3b5a38"/><circle cx="490" cy="470" r="26" fill="#4c6c48"/><circle cx="460" cy="440" r="14" fill="#7f9a70"/>
<polygon points="352,204 374,204 368,570 344,570" fill="#b3b4ac"/>
<polygon points="374,204 404,204 396,545 368,570" fill="#e6e6e2"/>
<polygon points="525,204 578,204 565,570 520,535" fill="#e6e5e0"/>
<polygon points="535,204 555,204 548,540 530,530" fill="#b9b9b2"/>
<polygon points="308,545 590,530 590,575 308,605" fill="#ecebe6"/>
<polygon points="308,605 590,575 575,602 308,638" fill="#e5e2da"/>
<path d="M308 622C400 610 500 600 570 590" stroke="#6b4a22" stroke-width="4" fill="none"/>
<polygon points="575,204 606,204 595,470 566,470" fill="#f0ecd9"/>
<polygon points="570,470 592,480 590,570 560,580" fill="#6f5330"/>
<polygon points="305,712 672,740 673,760 304,745" fill="#1d1b1b"/>
</g></g></g>

<!-- detail rows -->
<g class="si">
<path transform="translate(44.700 307.700) scale(1.11)" d="M3 13h2v-2H3v2zm0 4h2v-2H3v2zm0-8h2V7H3v2zm4 4h14v-2H7v2zm0 4h14v-2H7v2zM7 7v2h14V7H7z"/>
<path transform="translate(44.700 342.700) scale(1.11)" d="M3 13h2v-2H3v2zm0 4h2v-2H3v2zm0-8h2V7H3v2zm4 4h14v-2H7v2zm0 4h14v-2H7v2zM7 7v2h14V7H7z"/>
<path transform="translate(44.700 378) scale(1.11)" d="M20.500 3l-.16.03L15 5.100 9 3 3.360 4.900c-.21.07-.36.25-.36.48V20.500c0 .28.22.5.5.5l.16-.03L9 18.900l6 2.100 5.640-1.900c.21-.07.36-.25.36-.48V3.500c0-.28-.22-.5-.5-.5zM15 19l-6-2.110V5l6 2.110V19z"/>
<path transform="translate(44.700 414) scale(1.11)" d="M12 2C8.130 2 5 5.130 5 9c0 5.250 7 13 7 13s7-7.750 7-13c0-3.870-3.130-7-7-7z"/>
<path transform="translate(44.700 449) scale(1.11)" d="M16 11c1.660 0 2.990-1.340 2.990-3S17.660 5 16 5c-1.660 0-3 1.340-3 3s1.340 3 3 3zm-8 0c1.660 0 2.990-1.340 2.990-3S9.660 5 8 5C6.340 5 5 6.340 5 8s1.340 3 3 3zm0 2c-2.330 0-7 1.170-7 3.500V19h14v-2.500c0-2.330-4.670-3.500-7-3.500zm8 0c-.29 0-.62.02-.97.05 1.160.84 1.970 1.970 1.970 3.450V19h6v-2.500c0-2.330-4.670-3.500-7-3.500z"/>
<path transform="translate(44.700 484.500) scale(1.11)" d="M17 12h-5v5h5v-5zM16 1v2H8V1H6v2H5c-1.110 0-1.990.9-1.990 2L3 19c0 1.100.89 2 2 2h14c1.100 0 2-.9 2-2V5c0-1.100-.9-2-2-2h-1V1h-2zm3 18H5V8h14v11z"/>
<path transform="translate(44.700 520.800) scale(1.11)" d="M1 21h22L12 2 1 21zm12-3h-2v-2h2v2zm0-4h-2v-4h2v4z"/>
</g>
<text class="st2" x="77" y="326" textLength="63.500">Windows</text>
<text class="st2" x="77" y="361" textLength="290.500">Installation Not To Specification/Drawing</text>
<text class="st2" x="77" y="396" textLength="49">Plot 04</text>
<text class="st2" x="77" y="432" textLength="40.500">Living</text>
<text class="st2" x="77" y="467" textLength="95">Snagging LTD</text>
<text class="st2" x="77" y="502" textLength="83">27/01/2026</text>
<text class="st2" x="77" y="537" textLength="28">Low</text>

<!-- arrow -->
<path d="M342 432L236 634" stroke="#00accd" stroke-width="4" fill="none"/>
<polygon points="228,625 245,635 227,648" fill="#00accd"/>

<!-- comments -->
<text x="41" y="652" font-size="15" fill="#757575" textLength="75" lengthAdjust="spacingAndGlyphs">Comments</text>
<rect x="29" y="678" width="376" height="91" fill="#fff" stroke="#00accd" stroke-width="4"/>
<use href="#av" x="63" y="715"/>
<text x="103" y="706" font-size="15" fill="#b0b0b0" textLength="260">Administrators · Admin · in a few sec…</text>
<circle cx="386" cy="694" r="2.400" fill="#757575"/><circle cx="386" cy="701" r="2.400" fill="#757575"/><circle cx="386" cy="708" r="2.400" fill="#757575"/>
<rect x="103" y="719" width="135" height="25" rx="5" fill="#cfd8dc"/>
<polygon points="113,727 122,727 122,723 131,731 122,739 122,735 113,735" fill="#1c1c1c"/>
<text x="143" y="737" font-size="13" fill="#333" textLength="82" lengthAdjust="spacingAndGlyphs">Subcontractor</text>
<text x="243" y="736" font-size="18" fill="#212121" textLength="129" lengthAdjust="spacingAndGlyphs">Please follow up</text>
<use href="#av" x="63" y="801"/>
<text x="103" y="807" font-size="18" fill="#757575" textLength="124" lengthAdjust="spacingAndGlyphs">Add a comment</text>
<rect x="103" y="817.500" width="299" height="1" fill="#8f8f8f"/>
<path transform="translate(105 832.600) scale(1.09)" fill="#757575" d="M15 12c2.210 0 4-1.790 4-4s-1.790-4-4-4-4 1.790-4 4 1.790 4 4 4zm-9-2V7H4v3H1v2h3v3h2v-3h3v-2H6zm9 4c-2.670 0-8 1.340-8 4v2h16v-2c0-2.660-5.330-4-8-4z"/>
<text x="315" y="851" font-size="13" fill="#bdbdbd" textLength="72" lengthAdjust="spacing">COMMENT</text>

<!-- header -->
<rect y="68" width="1901" height="16" fill="url(#hs)"/>
<rect width="1901" height="68" fill="#29343b"/>
<path transform="translate(14 18.500) scale(1.11)" fill="#fff" d="M3 18h18v-2H3v2zm0-5h18v-2H3v2zm0-7v2h18V6H3z"/>
<g fill="none" stroke="#fff">
<path d="M75 24.500C80 20.500 92 22 92 30C92 36 86 37.500 80 37.500H74" stroke-width="3.200"/>
<path d="M73 31H84" stroke-width="2.400"/>
</g>
<polygon points="72,39 78,39 87,41 82,45.500" fill="#fff"/>
<text x="95" y="40" font-size="17" fill="#fff" textLength="65" lengthAdjust="spacingAndGlyphs">RDRIVE</text>
<rect x="340" y="7" width="779" height="53" rx="4" fill="#4b555d" filter="url(#sh)"/>
<rect x="349" y="13" width="110" height="40" rx="3" fill="#29343b"/>
<text x="379" y="39" font-size="15" font-weight="bold" fill="#fff" textLength="51" lengthAdjust="spacingAndGlyphs">ISSUES</text>
<path d="M489.500 16H632.500A17.500 17.500 0 0 1 632.500 51H489.500Z" fill="#cfd8dc"/>
<path d="M489.500 16H580V51H489.500Z" fill="#b0bec5"/>
<circle cx="489.500" cy="33.500" r="17.500" fill="#fff"/>
<path d="M481 26h5v9h-5zM491 28h7v13h-7zM479 40h5M494 23h3v2M483 44h3" stroke="#ccc" stroke-width=".8" fill="#f4f4f4"/>
<text x="516" y="39" font-size="15" fill="#37424a" textLength="54" lengthAdjust="spacingAndGlyphs">Drawing</text>
<text x="589" y="38" font-size="15" fill="#37424a" textLength="48" lengthAdjust="spacingAndGlyphs">Plot 04</text>
<path transform="translate(1765.700 19.800) scale(1.1)" fill="#fff" d="M19 2H5c-1.110 0-2 .9-2 2v14c0 1.100.89 2 2 2h4l3 3 3-3h4c1.100 0 2-.9 2-2V4c0-1.100-.9-2-2-2zm-6 16h-2v-2h2v2zm2.070-7.750l-.9.92C13.450 11.900 13 12.500 13 14h-2v-.5c0-1.100.45-2.100 1.170-2.830l1.240-1.260c.37-.36.59-.86.59-1.410 0-1.100-.9-2-2-2s-2 .9-2 2H8c0-2.210 1.790-4 4-4s4 1.790 4 4c0 .88-.36 1.680-.93 2.250z"/>
<g transform="translate(1845 33) scale(.91)"><use href="#av"/></g>

<!-- FAB -->
<circle cx="1854" cy="861" r="31" fill="#29343b" filter="url(#sh2)"/>
<path d="M1846 861H1862M1854 853V869" stroke="#fff" stroke-width="2.200"/>
</svg>
</body></html>
